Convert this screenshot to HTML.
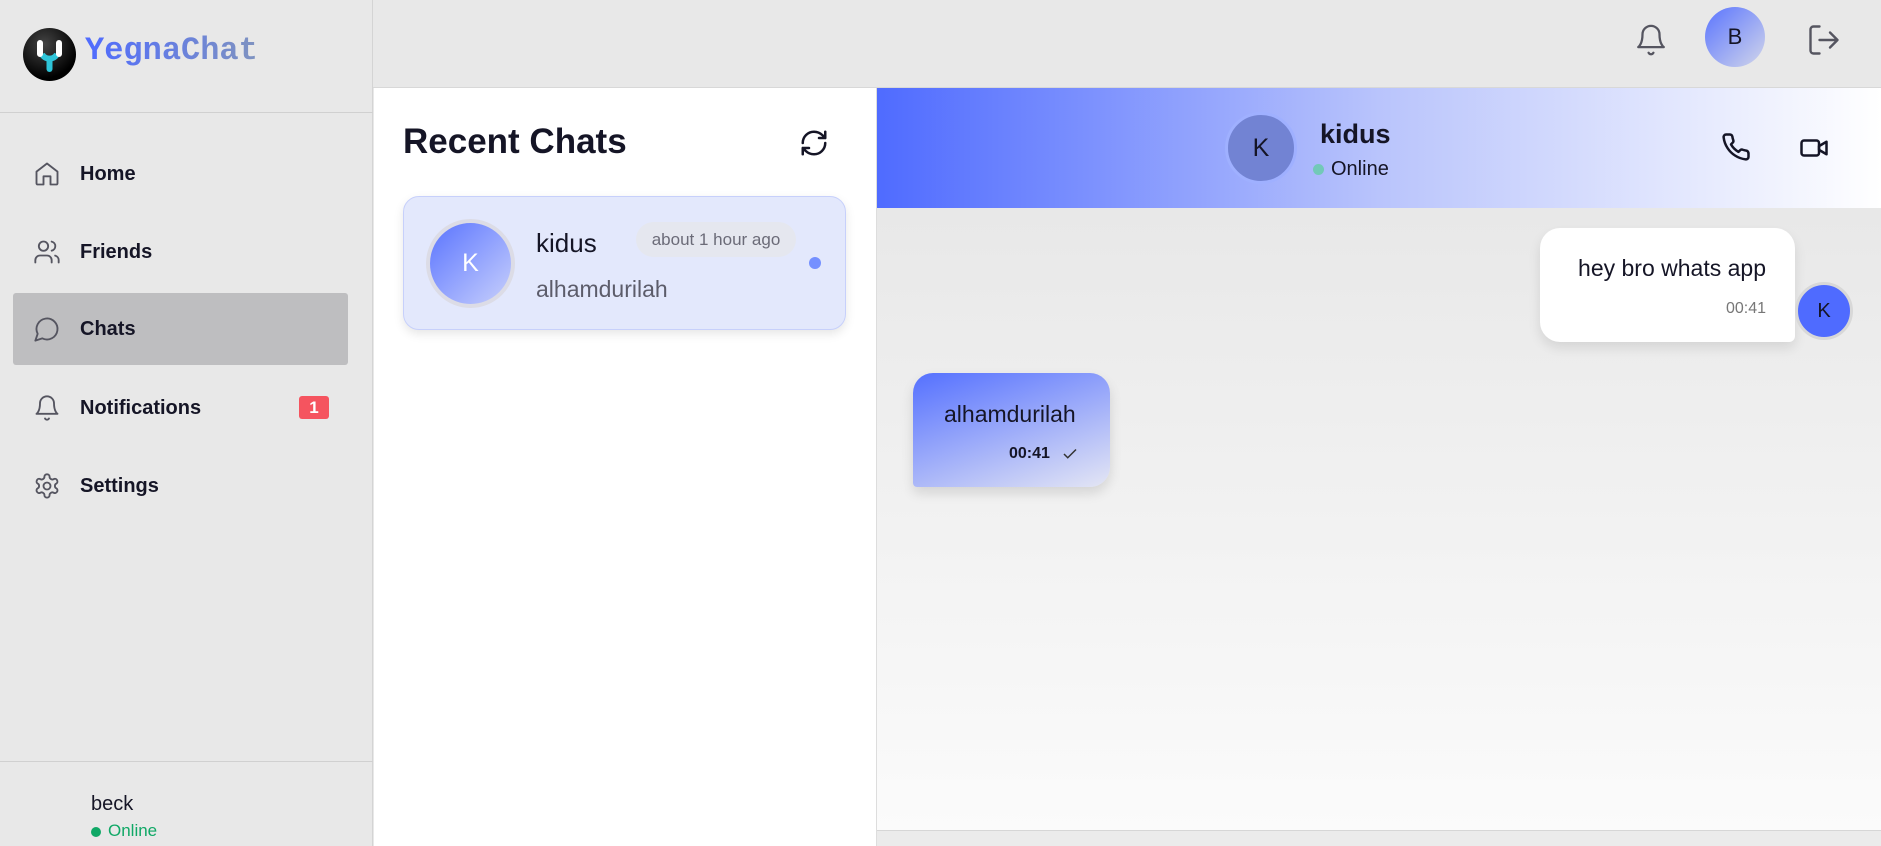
<!DOCTYPE html>
<html><head><meta charset="utf-8"><style>
*{box-sizing:border-box;margin:0;padding:0}
body{width:1881px;height:846px;overflow:hidden;font-family:"Liberation Sans",sans-serif;background:#e8e8e8;position:relative;color:#151526}
.abs{position:absolute}
.side{left:0;top:0;width:373px;height:846px;background:#e8e8e8;border-right:1px solid #d4d4d4}
.nav{position:absolute;left:13px;width:335px;height:72px;display:flex;align-items:center;font-size:20px;font-weight:600}
.nav svg{position:absolute;left:20px}
.nav span{position:absolute;left:67px}
.ico{fill:none;stroke:#555560;stroke-width:1.6;stroke-linecap:round;stroke-linejoin:round}
</style></head><body>
<div class="abs side">
  <div class="abs" style="left:23px;top:28px;width:53px;height:53px;border-radius:50%;background:radial-gradient(circle at 40% 30%,#444,#000 70%)"></div>
  <svg class="abs" style="left:23px;top:28px" width="53" height="53" viewBox="0 0 53 53"><path d="M19 26a8 7 0 0 0 15 0" fill="none" stroke="#2ec4d8" stroke-width="6"/><path d="M26.5 31v10" stroke="#2ec4d8" stroke-width="6" stroke-linecap="round"/><path d="M17 15v11M36 15v11" stroke="#fff" stroke-width="6" stroke-linecap="round"/></svg>
  <div class="abs" style="left:85px;top:32px;font-family:'Liberation Mono',monospace;font-weight:700;font-size:32px;background:linear-gradient(90deg,#4f6bff,#7f93c0);-webkit-background-clip:text;color:transparent">YegnaChat</div>
  <div class="abs" style="left:0;top:112px;width:373px;border-top:1px solid #d0d0d0"></div>
  <div class="nav" style="top:138px"><svg width="28" height="28" viewBox="0 0 24 24" class="ico"><path d="M3 10l9-7 9 7v10a1 1 0 0 1-1 1h-5v-7H9v7H4a1 1 0 0 1-1-1z"/></svg><span>Home</span></div>
  <div class="nav" style="top:216px"><svg width="28" height="28" viewBox="0 0 24 24" class="ico"><circle cx="9" cy="7" r="4"/><path d="M2 21v-2a4 4 0 0 1 4-4h6a4 4 0 0 1 4 4v2M16 3.1a4 4 0 0 1 0 7.8M22 21v-2a4 4 0 0 0-3-3.9"/></svg><span>Friends</span></div>
  <div class="nav" style="top:293px;background:#bebec0;border-radius:3px"><svg width="28" height="28" viewBox="0 0 24 24" class="ico"><path d="M7.9 20A9 9 0 1 0 4 16.1L2 22z"/></svg><span>Chats</span></div>
  <div class="nav" style="top:372px"><svg width="28" height="28" viewBox="0 0 24 24" class="ico"><path d="M6 8a6 6 0 0 1 12 0c0 7 3 9 3 9H3s3-2 3-9M10.3 21a1.9 1.9 0 0 0 3.4 0"/></svg><span>Notifications</span><div style="position:absolute;left:286px;top:24px;width:30px;height:23px;background:#f5545f;color:#fff;border-radius:3px;font-size:17px;font-weight:700;text-align:center;line-height:23px">1</div></div>
  <div class="nav" style="top:450px"><svg width="28" height="28" viewBox="0 0 24 24" class="ico"><circle cx="12" cy="12" r="3"/><path d="M12.2 2h-.4a2 2 0 0 0-2 2v.2a2 2 0 0 1-1 1.7l-.4.3a2 2 0 0 1-2 0l-.2-.1a2 2 0 0 0-2.7.7l-.2.4a2 2 0 0 0 .7 2.7l.2.1a2 2 0 0 1 1 1.7v.5a2 2 0 0 1-1 1.7l-.2.1a2 2 0 0 0-.7 2.7l.2.4a2 2 0 0 0 2.7.7l.2-.1a2 2 0 0 1 2 0l.4.3a2 2 0 0 1 1 1.7v.2a2 2 0 0 0 2 2h.4a2 2 0 0 0 2-2v-.2a2 2 0 0 1 1-1.7l.4-.3a2 2 0 0 1 2 0l.2.1a2 2 0 0 0 2.7-.7l.2-.4a2 2 0 0 0-.7-2.7l-.2-.1a2 2 0 0 1-1-1.7v-.5a2 2 0 0 1 1-1.7l.2-.1a2 2 0 0 0 .7-2.7l-.2-.4a2 2 0 0 0-2.7-.7l-.2.1a2 2 0 0 1-2 0l-.4-.3a2 2 0 0 1-1-1.7V4a2 2 0 0 0-2-2z"/></svg><span>Settings</span></div>
  <div class="abs" style="left:0;top:761px;width:373px;border-top:1px solid #d0d0d0"></div>
  <div class="abs" style="left:91px;top:793px;font-size:20px">beck</div>
  <div class="abs" style="left:91px;top:827px;width:10px;height:10px;border-radius:50%;background:#10a866"></div>
  <div class="abs" style="left:108px;top:821px;font-size:17px;color:#10a866">Online</div>
</div>
<svg class="abs ico" style="left:1634px;top:22px" width="34" height="36" viewBox="0 0 24 24"><path d="M6 8a6 6 0 0 1 12 0c0 7 3 9 3 9H3s3-2 3-9M10.3 21a1.9 1.9 0 0 0 3.4 0"/></svg>
<div class="abs" style="left:1705px;top:7px;width:60px;height:60px;border-radius:50%;background:linear-gradient(135deg,#5a74ff,#d2d6ea);text-align:center;line-height:60px;font-size:22px">B</div>
<svg class="abs ico" style="left:1806px;top:22px" width="36" height="36" viewBox="0 0 24 24"><path d="M9 21H5a2 2 0 0 1-2-2V5a2 2 0 0 1 2-2h4M16 17l5-5-5-5M21 12H9"/></svg>
<div class="abs" style="left:373px;top:87px;width:1508px;border-top:1px solid #d8d8d8"></div>
<div class="abs" style="left:374px;top:88px;width:503px;height:758px;background:#fff;border-right:1px solid #ddd"></div>
<div class="abs" style="left:403px;top:122px;font-size:35px;font-weight:700">Recent Chats</div>
<svg class="abs" style="left:799px;top:128px" width="30" height="30" viewBox="0 0 24 24" fill="none" stroke="#151526" stroke-width="2" stroke-linecap="round" stroke-linejoin="round"><path d="M3 12a9 9 0 0 1 9-9 9.8 9.8 0 0 1 6.7 2.7L21 8M21 3v5h-5M21 12a9 9 0 0 1-9 9 9.8 9.8 0 0 1-6.7-2.7L3 16M8 16H3v5"/></svg>
<div class="abs" style="left:403px;top:196px;width:443px;height:134px;background:#e3e8fc;border:1px solid #c7d0fb;border-radius:16px;box-shadow:0 4px 10px rgba(0,0,0,.1)"></div>
<div class="abs" style="left:426px;top:219px;width:89px;height:89px;border-radius:50%;border:4px solid #dcdce6;background:linear-gradient(135deg,#5a74ff,#c8d0fc);color:#fff;text-align:center;line-height:81px;font-size:25px">K</div>
<div class="abs" style="left:536px;top:228px;font-size:26px">kidus</div>
<div class="abs" style="left:636px;top:222px;width:160px;height:35px;border-radius:18px;background:#e5e7ef;color:#6b6b78;font-size:17px;text-align:center;line-height:35px">about 1 hour ago</div>
<div class="abs" style="left:536px;top:276px;font-size:23px;color:#5c5c6a">alhamdurilah</div>
<div class="abs" style="left:809px;top:257px;width:12px;height:12px;border-radius:50%;background:#7590ff"></div>
<div class="abs" style="left:877px;top:88px;width:1004px;height:120px;background:linear-gradient(90deg,#4f6bff,#b9c4fc 50%,#fff)"></div>
<div class="abs" style="left:1225px;top:112px;width:72px;height:72px;border-radius:50%;border:3px solid #9fb0ff;background:#7283d3;text-align:center;line-height:66px;font-size:25px">K</div>
<div class="abs" style="left:1320px;top:119px;font-size:27px;font-weight:600">kidus</div>
<div class="abs" style="left:1313px;top:164px;width:11px;height:11px;border-radius:50%;background:#72c9b8"></div>
<div class="abs" style="left:1331px;top:158px;font-size:20px">Online</div>
<svg class="abs" style="left:1721px;top:132px" width="30" height="30" viewBox="0 0 24 24" fill="none" stroke="#151526" stroke-width="2" stroke-linejoin="round"><path d="M22 16.9v3a2 2 0 0 1-2.2 2 19.8 19.8 0 0 1-8.6-3.1 19.5 19.5 0 0 1-6-6A19.8 19.8 0 0 1 2.1 4.2 2 2 0 0 1 4.1 2h3a2 2 0 0 1 2 1.7c.1 1 .4 1.9.7 2.8a2 2 0 0 1-.5 2.1L8 9.9a16 16 0 0 0 6 6l1.3-1.3a2 2 0 0 1 2.1-.4c.9.3 1.8.6 2.8.7a2 2 0 0 1 1.7 2z"/></svg>
<svg class="abs" style="left:1799px;top:133px" width="30" height="30" viewBox="0 0 24 24" fill="none" stroke="#151526" stroke-width="2" stroke-linejoin="round"><rect x="2" y="6" width="14" height="12" rx="2"/><path d="M16 10.5l6-3.5v10l-6-3.5z"/></svg>
<div class="abs" style="left:877px;top:208px;width:1004px;height:622px;background:linear-gradient(180deg,#e8e8e8,#fbfbfb)"></div>
<div class="abs" style="left:877px;top:830px;width:1004px;height:16px;background:#ebebeb;border-top:1px solid #d6d6d6"></div>
<div class="abs" style="left:1540px;top:228px;width:255px;height:114px;background:#fff;border-radius:20px 20px 6px 20px;box-shadow:0 6px 12px rgba(0,0,0,.1)"></div>
<div class="abs" style="left:1530px;top:255px;width:236px;text-align:right;font-size:23px">hey bro whats app</div>
<div class="abs" style="left:1540px;top:300px;width:226px;text-align:right;font-size:16px;color:#777">00:41</div>
<div class="abs" style="left:1795px;top:282px;width:58px;height:58px;border-radius:50%;border:3px solid #d8d8d8;background:#4f6bff;text-align:center;line-height:52px;font-size:20px">K</div>
<div class="abs" style="left:913px;top:373px;width:197px;height:114px;border-radius:20px 20px 20px 4px;background:linear-gradient(160deg,#5470ff,#e4e6f4);box-shadow:0 6px 12px rgba(0,0,0,.12)"></div>
<div class="abs" style="left:944px;top:401px;font-size:23px">alhamdurilah</div>
<div class="abs" style="left:1009px;top:445px;font-size:16px;font-weight:600">00:41</div>
<svg class="abs" style="left:1061px;top:445px" width="18" height="18" viewBox="0 0 24 24" fill="none" stroke="#333" stroke-width="2"><path d="M4 12l5 5L20 6"/></svg>
</body></html>
